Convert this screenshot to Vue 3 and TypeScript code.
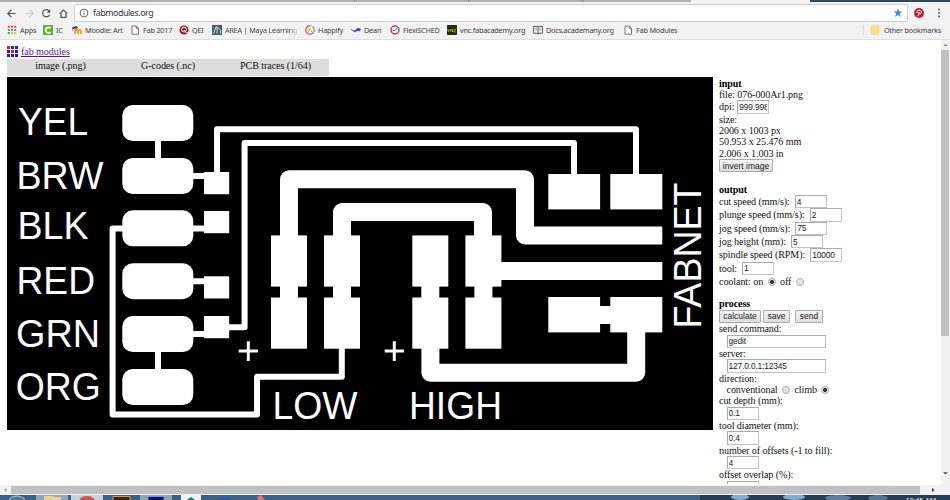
<script setup lang="ts">
import { ref } from 'vue'

interface Bookmark { label: string; icon: string }
const bookmarks: Bookmark[] = [
  { label: 'Apps', icon: 'apps' },
  { label: 'IC', icon: 'ic' },
  { label: 'Moodle: Art', icon: 'moodle' },
  { label: 'Fab 2017', icon: 'page' },
  { label: 'QEI', icon: 'qei' },
  { label: 'AREA | Maya Learning', icon: 'area' },
  { label: 'Happify', icon: 'happify' },
  { label: 'Dean', icon: 'dean' },
  { label: 'FlexiSCHED', icon: 'flexi' },
  { label: 'vnc.fabacademy.org', icon: 'vnc' },
  { label: 'Docs.academany.org', icon: 'docs' },
  { label: 'Fab Modules', icon: 'page' },
]

interface Field { label: string; value: string }
const outputs = ref<Field[]>([
  { label: 'cut speed (mm/s):', value: '4' },
  { label: 'plunge speed (mm/s):', value: '2' },
  { label: 'jog speed (mm/s):', value: '75' },
  { label: 'jog height (mm):', value: '5' },
  { label: 'spindle speed (RPM):', value: '10000' },
  { label: 'tool:', value: '1' },
])
const cuts = ref<Field[]>([
  { label: 'cut depth (mm):', value: '0.1' },
  { label: 'tool diameter (mm):', value: '0.4' },
  { label: 'number of offsets (-1 to fill):', value: '4' },
  { label: 'offset overlap (%):', value: '' },
])
const dpi = ref('999.998')
const command = ref('gedit')
const server = ref('127.0.0.1:12345')
const coolant = ref('on')
const direction = ref('climb')

const padRows = [105, 158, 210.3, 263.2, 316, 369]
const headers = [
  { x: 204, y: 172 }, { x: 204, y: 211 }, { x: 204, y: 276.3 }, { x: 204, y: 316 },
]
const columns = [271, 324, 412.3, 465.4]
const names = [
  { t: 'YEL', x: 18, y: 134.5, w: 70 },
  { t: 'BRW', x: 16.5, y: 189.3, w: 87 },
  { t: 'BLK', x: 17.5, y: 239, w: 71 },
  { t: 'RED', x: 16.5, y: 294, w: 78.5 },
  { t: 'GRN', x: 16, y: 347, w: 84 },
  { t: 'ORG', x: 15.7, y: 400, w: 85 },
  { t: 'LOW', x: 272.5, y: 418.5, w: 85 },
  { t: 'HIGH', x: 409, y: 418.5, w: 93 },
]
</script>

<template>
  <div class="screen">
    <div class="tabs"><span class="tab t1"></span><span class="tab t2"></span><span class="tab t3"></span><span class="tab active"></span><span class="desktop"></span></div>
    <div class="toolbar">
      <svg class="nav" viewBox="0 0 70 18" fill="none" stroke="#555" stroke-width="1.2">
        <path d="M15.5 9.5H8M11.4 5.8L7.8 9.5l3.6 3.7" />
        <path d="M25.5 9.5H33M29.6 5.8l3.6 3.7-3.6 3.7" stroke="#d0d0d0" />
        <path d="M49 6.8a3.6 3.6 0 1 0 .6 3.9" /><path d="M50.3 5.2v3.6h-3.6z" fill="#555" stroke="none" />
        <path d="M59.7 9.6L63.5 6l3.8 3.6M61 9v4.3h5V9" />
      </svg>
      <div class="omnibox">
        <svg class="info" viewBox="0 0 10 10"><circle cx="5" cy="5" r="3.9" fill="none" stroke="#666" /><path d="M5 4.5v2.7M5 2.7v1" stroke="#666" /></svg>
        <span>fabmodules.org</span>
        <svg class="star" viewBox="0 0 10 10"><path d="M5 .6l1.2 3h3.2L6.9 5.6l.9 3.3L5 7.1 2.2 8.9l.9-3.3L.6 3.6h3.2z" fill="#4285f4" /></svg>
      </div>
      <svg class="pin" viewBox="0 0 10 10"><circle cx="5" cy="5" r="4.9" fill="#c8102e" /><path d="M3.1 5.1C2.3 3.4 3.6 2.1 5.2 2.1c2.8 0 2.6 3.7.7 3.9-.5 0-.9-.3-1-.7M5.2 3.8L4.1 8.3" fill="none" stroke="#fff" stroke-width="1" /></svg>
      <svg class="dots" viewBox="0 0 4 10"><circle v-for="y in [1.4, 5, 8.6]" :key="y" cx="2" :cy="y" r="1" fill="#555" /></svg>
    </div>
    <div class="bookmarks">
      <div v-for="b in bookmarks" :key="b.label" class="bookmark" :class="b.icon">
        <svg viewBox="0 0 10 10">
          <g v-if="b.icon === 'apps'">
            <rect v-for="n in 9" :key="n" :x="((n - 1) % 3) * 3.2 + 0.8" :y="Math.floor((n - 1) / 3) * 3.2 + 0.7" width="2" height="2" :fill="n < 4 ? '#ea4335' : n === 4 ? '#34a853' : n === 5 ? '#4285f4' : n < 8 ? '#34a853' : '#fbbc05'" />
          </g>
          <g v-else-if="b.icon === 'ic'"><rect width="10" height="10" fill="#64b32c" /><path d="M7.6 3.3A2.8 2.8 0 1 0 7.6 7" fill="none" stroke="#fff" stroke-width="1.8" /></g>
          <g v-else-if="b.icon === 'moodle'" fill="none"><path d="M3 9V5.8Q4.5 3.8 5.8 5.8V9M5.8 5.8Q7.6 3.8 8.7 5.8V9" stroke="#f7931e" stroke-width="1.7" /><path d="M0 3l4-1.7 2 1.2-3 1.5zM.8 3v3" fill="#444" stroke="#444" stroke-width=".6" /></g>
          <path v-else-if="b.icon === 'page'" d="M2 1h4.2l2.3 2.4V9.2H2zM6.2 1v2.4h2.3" fill="#fff" stroke="#666" stroke-width=".9" />
          <g v-else-if="b.icon === 'qei'" fill="none"><circle cx="5" cy="5" r="4.6" fill="#9f1829" /><circle cx="5" cy="4.5" r="2.4" stroke="#fff" /><path d="M5 5l1.5 2.4 2.6.7" stroke="#f2d9d9" /></g>
          <g v-else-if="b.icon === 'area'"><rect width="10" height="10" fill="#4b5f6c" /><path d="M1.5 8.5L4 2h1v6.5M5 2l3.5 3v3.5" fill="none" stroke="#c7dce4" /></g>
          <g v-else-if="b.icon === 'happify'" fill="none" stroke-width="1.2"><path d="M5 .7A4.3 4.3 0 0 0 2 8" stroke="#ef4e4e" /><path d="M2 8a4.3 4.3 0 0 0 6 0" stroke="#b052b5" /><path d="M8 8A4.3 4.3 0 0 0 7.5 1.5" stroke="#39b8a8" /><path d="M7.5 1.5A4.3 4.3 0 0 0 5 .7" stroke="#f7b52b" /><path d="M3.8 2.8v4.4M3.8 5q2.5-1.2 2.5.5v1.7" stroke="#f4982c" stroke-width=".9" /></g>
          <path v-else-if="b.icon === 'dean'" d="M0 4.2Q2 6.8 4 5.4T6.5 3.5T10 4.4L8.3 6.1Q6 5 5 6.4T0 4.2z" fill="#24458c" stroke="#24458c" stroke-width=".5" />
          <g v-else-if="b.icon === 'flexi'" fill="none"><circle cx="5" cy="5" r="4" stroke="#bd3456" stroke-width="1.4" /><path d="M5 1a4 4 0 0 1 4 4" stroke="#7690a8" stroke-width="1.4" /><path d="M2.5 5.5h2.7L7 3" stroke="#4470a8" /></g>
          <g v-else-if="b.icon === 'vnc'"><rect width="10" height="10" rx=".8" fill="#242b16" /><path d="M.5 4l1 3 1-3M3.8 7V4.2l2 2.8V4.2M9 4.5H7.2v2.3H9" fill="none" stroke="#a8b51e" stroke-width=".8" /></g>
          <g v-else fill="#fff" stroke="#444" stroke-width=".9"><path d="M.6 1.4h3.6L5 2l.8-.6h3.6v6.8H6L5 9 4 8.2H.6zM5 2v7" /><path d="M1.8 3.3H4M1.8 5H4M6.1 3.3h2.2M6.1 5h2.2" stroke-width=".5" /></g>
        </svg>
        <span>{{ b.label }}</span>
      </div>
      <div class="other"><svg viewBox="0 0 10 10"><path d="M1 .8h8v7.4L7.8 9.2H1z" fill="#ffe08a" stroke="#f5d372" stroke-width=".7" /></svg><span>Other bookmarks</span></div>
    </div>

    <div class="body">
      <main class="viewport">
        <header class="brand">
          <svg viewBox="0 0 11 11"><rect v-for="n in 9" :key="n" :x="((n - 1) % 3) * 4" :y="Math.floor((n - 1) / 3) * 4" width="3" height="3" :fill="n === 1 || n === 5 ? '#ff1010' : '#1818f0'" /></svg>
          <a>fab modules</a>
        </header>
        <nav class="menu"><span>image (.png)</span><span>G-codes (.nc)</span><span>PCB traces (1/64)</span></nav>
        <div class="workspace">
          <svg class="pcb" viewBox="7 77 706 353">
            <rect x="7" y="77" width="706" height="353" fill="#000" />
            <g fill="#fff">
              <rect v-for="y in padRows" :key="y" x="122.3" :y="y" width="71" height="36" rx="10.5" />
              <rect v-for="h in headers" :key="h.y" :x="h.x" :y="h.y" width="25.2" height="22.2" />
              <g v-for="x in columns" :key="x">
                <rect :x="x" y="235.4" width="36" height="51.2" />
                <rect :x="x + 9" y="286" width="18" height="12" />
                <rect :x="x" y="297.5" width="36" height="51.2" />
              </g>
              <rect x="548.3" y="174" width="51.8" height="35.4" /><rect x="610.3" y="174" width="52" height="35.4" />
              <rect x="548.3" y="297" width="51.8" height="35.4" /><rect x="610.3" y="297" width="52" height="35.4" />
              <rect x="600" y="306" width="11" height="18" />
            </g>
            <g class="thin">
              <path d="M158 140V160M158 351V370M192 176H205M192 228.5H205M192 281.2H205M192 334H205" />
              <path d="M217 173V129.3H636V175M228 327.2H244.6V143H574V175" />
              <path d="M123 228.5H112.6V414.5H257V376.8H341.8V348" />
            </g>
            <g class="wide">
              <path d="M289 236V179.3H525V235.4H662.3M342 236V212H483V236M500 271H662.3M430.4 348V372.7H636.2V332" />
            </g>
            <path d="M238.7 351H258M248.3 341.2V361M384.7 351H404M394.3 341.2V361" stroke="#fff" stroke-width="3" />
            <text v-for="n in names" :key="n.t" :x="n.x" :y="n.y" :textLength="n.w" lengthAdjust="spacingAndGlyphs">{{ n.t }}</text>
            <text transform="translate(701 328.5) rotate(-90)" textLength="146" lengthAdjust="spacingAndGlyphs">FABNET</text>
          </svg>
          <aside class="controls">
            <b>input</b>
            <div class="line">file: 076-000Ar1.png</div>
            <div class="line dpi">dpi: <input v-model="dpi" type="text" /></div>
            <div class="line">size:</div>
            <div class="line">2006 x 1003 px</div>
            <div class="line">50.953 x 25.476 mm</div>
            <div class="line">2.006 x 1.003 in</div>
            <div class="buttons"><button class="invert">invert image</button></div>
            <b class="section">output</b>
            <div v-for="o in outputs" :key="o.label" class="line field"><span>{{ o.label }}</span><input v-model="o.value" type="text" /></div>
            <div class="line coolant">coolant: on <i class="radio" :class="{ on: coolant === 'on' }" @click="coolant = 'on'"></i> off <i class="radio" :class="{ on: coolant === 'off' }" @click="coolant = 'off'"></i></div>
            <b class="section">process</b>
            <div class="buttons"><button class="calc">calculate</button><button class="save">save</button><button class="send">send</button></div>
            <div class="line">send command:</div>
            <div class="indent"><input v-model="command" class="long" type="text" /></div>
            <div class="line">server:</div>
            <div class="indent"><input v-model="server" class="long" type="text" /></div>
            <div class="line">direction:</div>
            <div class="line direction">conventional <i class="radio" :class="{ on: direction === 'conventional' }" @click="direction = 'conventional'"></i> climb <i class="radio" :class="{ on: direction === 'climb' }" @click="direction = 'climb'"></i></div>
            <template v-for="c in cuts" :key="c.label">
              <div class="line">{{ c.label }}</div>
              <div class="indent"><input v-model="c.value" type="text" /></div>
            </template>
          </aside>
        </div>
      </main>
      <div class="vscroll"><svg viewBox="0 0 9 10"><path d="M2.5 6L4.5 4l2 2z" fill="#777" /></svg><div class="vthumb"></div><svg class="down" viewBox="0 0 9 10"><path d="M2.2 4.2h4.6l-2.3 2.3z" fill="#444" /></svg></div>
    </div>
    <div class="hscroll"><svg viewBox="0 0 11 10"><path d="M6.5 3v4L4.5 5z" fill="#888" /></svg><div class="hthumb"></div><svg class="right" viewBox="0 0 11 10"><path d="M4 2.8v4.4L6.6 5z" fill="#444" /></svg></div>
    <div class="taskbar">
      <svg viewBox="0 0 950 5" preserveAspectRatio="none">
        <path d="M0 0h950v5H0z" fill="#3a6189" />
        <path d="M36 0h32v5H36zM71 0h32v5H71zM140 0h32v5h-32z" fill="#91a6b9" /><path d="M71 0h32v5H71z" fill="#c6d1da" />
        <ellipse cx="17" cy="6" rx="8" ry="5" fill="#527b93" stroke="#b5ced7" />
        <path d="M44 1h10v1h7v3H44z" fill="#ead583" /><ellipse cx="87" cy="5.5" rx="7.5" ry="4.5" fill="#dc5148" />
        <path d="M113 5V1.5h17V5" fill="#35291f" stroke="#e69a31" /><path d="M148 5V1.5h16V5" fill="#101078" stroke="#67a0df" />
        <path d="M181 0h20v5h-20z" fill="#edf3f3" /><path d="M187 5l4-3 4 3z" fill="#078174" />
        <path d="M219 5q6-5 12 0z" fill="#1d5bad" /><path d="M257 2l4-2 4 5h-7z" fill="#e57479" />
        <path d="M700 0h250v5H700z" fill="#253e58" />
        <g fill="#83add0"><ellipse cx="740" cy="2" rx="9" ry="3" /><ellipse cx="794" cy="2" rx="11" ry="3" /><ellipse cx="838" cy="3" rx="13" ry="3" opacity=".6" /><ellipse cx="878" cy="3" rx="10" ry="3" opacity=".5" /></g>
      </svg>
      <span class="clock">10:45 AM</span>
    </div>
  </div>
</template>

<style>
body { margin: 0; overflow: hidden; }
</style>
<style scoped>
* { box-sizing: border-box; }
.screen { width: 950px; height: 500px; overflow: hidden; display: flex; flex-direction: column; background: #fff; font-family: "Liberation Serif", serif; }
.tabs { height: 2px; flex: none; display: flex; background: #b0b0b0; }
.tab { flex: none; border-right: 1px solid #888; width: 114px; }
.t1 { width: 355px; }
.active { width: 119px; margin-left: 108px; background: #f2f2f2; border: 0; }
.desktop { flex: 1; background: #344758; }
.toolbar { height: 20px; flex: none; display: flex; align-items: center; background: #f2f2f2; padding-top: 2px; }
.nav { width: 70px; height: 18px; flex: none; margin-right: 4px; }
.omnibox { width: 834px; height: 18px; flex: none; display: flex; align-items: center; background: #fff; border: 1px solid #cfcfcf; border-radius: 1px; padding: 0 4px; font: 8.8px/16px "Noto Sans", sans-serif; letter-spacing: -.4px; color: #333; }
.info { width: 10px; height: 10px; margin-right: 4px; }
.star { width: 10px; height: 10px; margin-left: auto; }
.pin { width: 10px; height: 10px; flex: none; margin-left: 6px; }
.dots { width: 4px; height: 10px; flex: none; margin-left: 13px; }
.bookmarks { height: 18px; flex: none; display: grid; grid-template-columns: 36px 29px 58px 49px 33px 93px 46px 39px 57px 86px 90px 62px 1fr; padding-left: 7px; padding-bottom: 1px; background: #f2f2f2; border-bottom: 1px solid #dedede; font: 7.3px/15px "Noto Sans", sans-serif; letter-spacing: -.22px; color: #404040; }
.bookmark { display: flex; align-items: center; white-space: nowrap; gap: 3px; }
.bookmark svg, .other svg { width: 10px; height: 10px; flex: none; }
.bookmark.area { width: 85px; mask-image: linear-gradient(90deg, #000 90%, rgba(0, 0, 0, .25)); }
.other { display: flex; align-items: center; gap: 4px; margin-left: auto; margin-right: 9px; border-left: 1px solid #ddd; padding-left: 6px; height: 10px; margin-top: 3px; white-space: nowrap; }
.body { height: 445px; flex: none; display: flex; }
.viewport { width: 941px; height: 444px; overflow: hidden; padding: 6px 0 0 7px; }
.brand { height: 13px; display: flex; align-items: flex-start; gap: 3px; font-size: 10.1px; line-height: 11px; letter-spacing: -.08px; }
.brand svg { width: 11px; height: 11px; flex: none; }
.brand a { color: #551a8b; text-decoration: underline; }
.menu { width: 322px; height: 17px; display: grid; grid-template-columns: 107px 108px 107px; background: #ddd; text-align: center; font-size: 10.1px; line-height: 13px; letter-spacing: -.08px; color: #111; }
.workspace { display: flex; margin-top: 1px; }
.pcb { width: 706px; height: 353px; flex: none; display: block; }
.pcb text { font: 38px "Liberation Sans", sans-serif; fill: #fff; }
.thin, .wide { fill: none; stroke: #fff; stroke-width: 6; stroke-linejoin: round; }
.wide { stroke-width: 18; }
.controls { width: 220px; padding-left: 6px; margin-top: .5px; font-size: 10.1px; line-height: 11.35px; letter-spacing: -.09px; color: #111; white-space: nowrap; }
.controls b { display: block; height: 11.3px; color: #000; }
.line { height: 11.35px; }
.controls input { width: 32px; height: 13.4px; border: 1px solid #c3c3c3; border-top-color: #aaa; border-left-color: #aaa; padding: 0 1px; margin: 0; background: #fff; color: #222; font: 8.4px/11px "Liberation Sans", sans-serif; letter-spacing: -.15px; display: inline-block; vertical-align: middle; border-radius: 0; }
.dpi { height: 13.4px; display: flex; align-items: center; gap: 3px; }
.buttons { height: 13.5px; display: flex; }
button { height: 13.5px; padding: 0; margin: 0; border: 1px solid #aaa; border-radius: 1px; background: linear-gradient(#f6f6f6, #ddd); color: #222; font: 8.5px/10px "Liberation Sans", sans-serif; }
.invert { width: 54px; }
.calc { width: 42px; }
.save { width: 27px; margin-left: 2px; }
.send { width: 28px; margin-left: 5px; }
.section { margin-top: 11.3px; }
.field { height: 13.35px; display: flex; align-items: center; gap: 5px; }
.coolant { height: 12px; line-height: 13px; }
.radio { display: inline-block; width: 8px; height: 8px; border: 1px solid #aaa; border-radius: 50%; background: radial-gradient(#ddd, #eee); margin: 0 2px; vertical-align: -1px; }
.radio.on { background: radial-gradient(circle, #333 0 1.7px, #e5e5e5 2.3px); }
.indent { height: 13.35px; padding-left: 7.5px; display: flex; }
.controls input.long { width: 99.5px; }
.direction { padding-left: 7.5px; }
.vscroll { width: 9px; background: #f1f1f1; display: flex; flex-direction: column; }
.vscroll svg { width: 9px; height: 10px; flex: none; }
.vthumb { width: 8px; height: 286px; background: #c1c1c1; }
.vscroll .down { margin-top: auto; margin-bottom: 7px; }
.hscroll { height: 10px; flex: none; display: flex; background: #f1f1f1; }
.hscroll svg { width: 11px; height: 10px; flex: none; }
.hthumb { width: 909px; height: 8px; margin-top: 1px; background: #c1c1c1; }
.hscroll .right { margin-left: auto; margin-right: 11px; }
.taskbar { height: 5px; flex: none; position: relative; overflow: hidden; }
.taskbar svg { width: 950px; height: 5px; display: block; }
.clock { position: absolute; right: 14px; top: 1px; color: #fff; font: 7px/9px "Noto Sans", sans-serif; }
</style>
